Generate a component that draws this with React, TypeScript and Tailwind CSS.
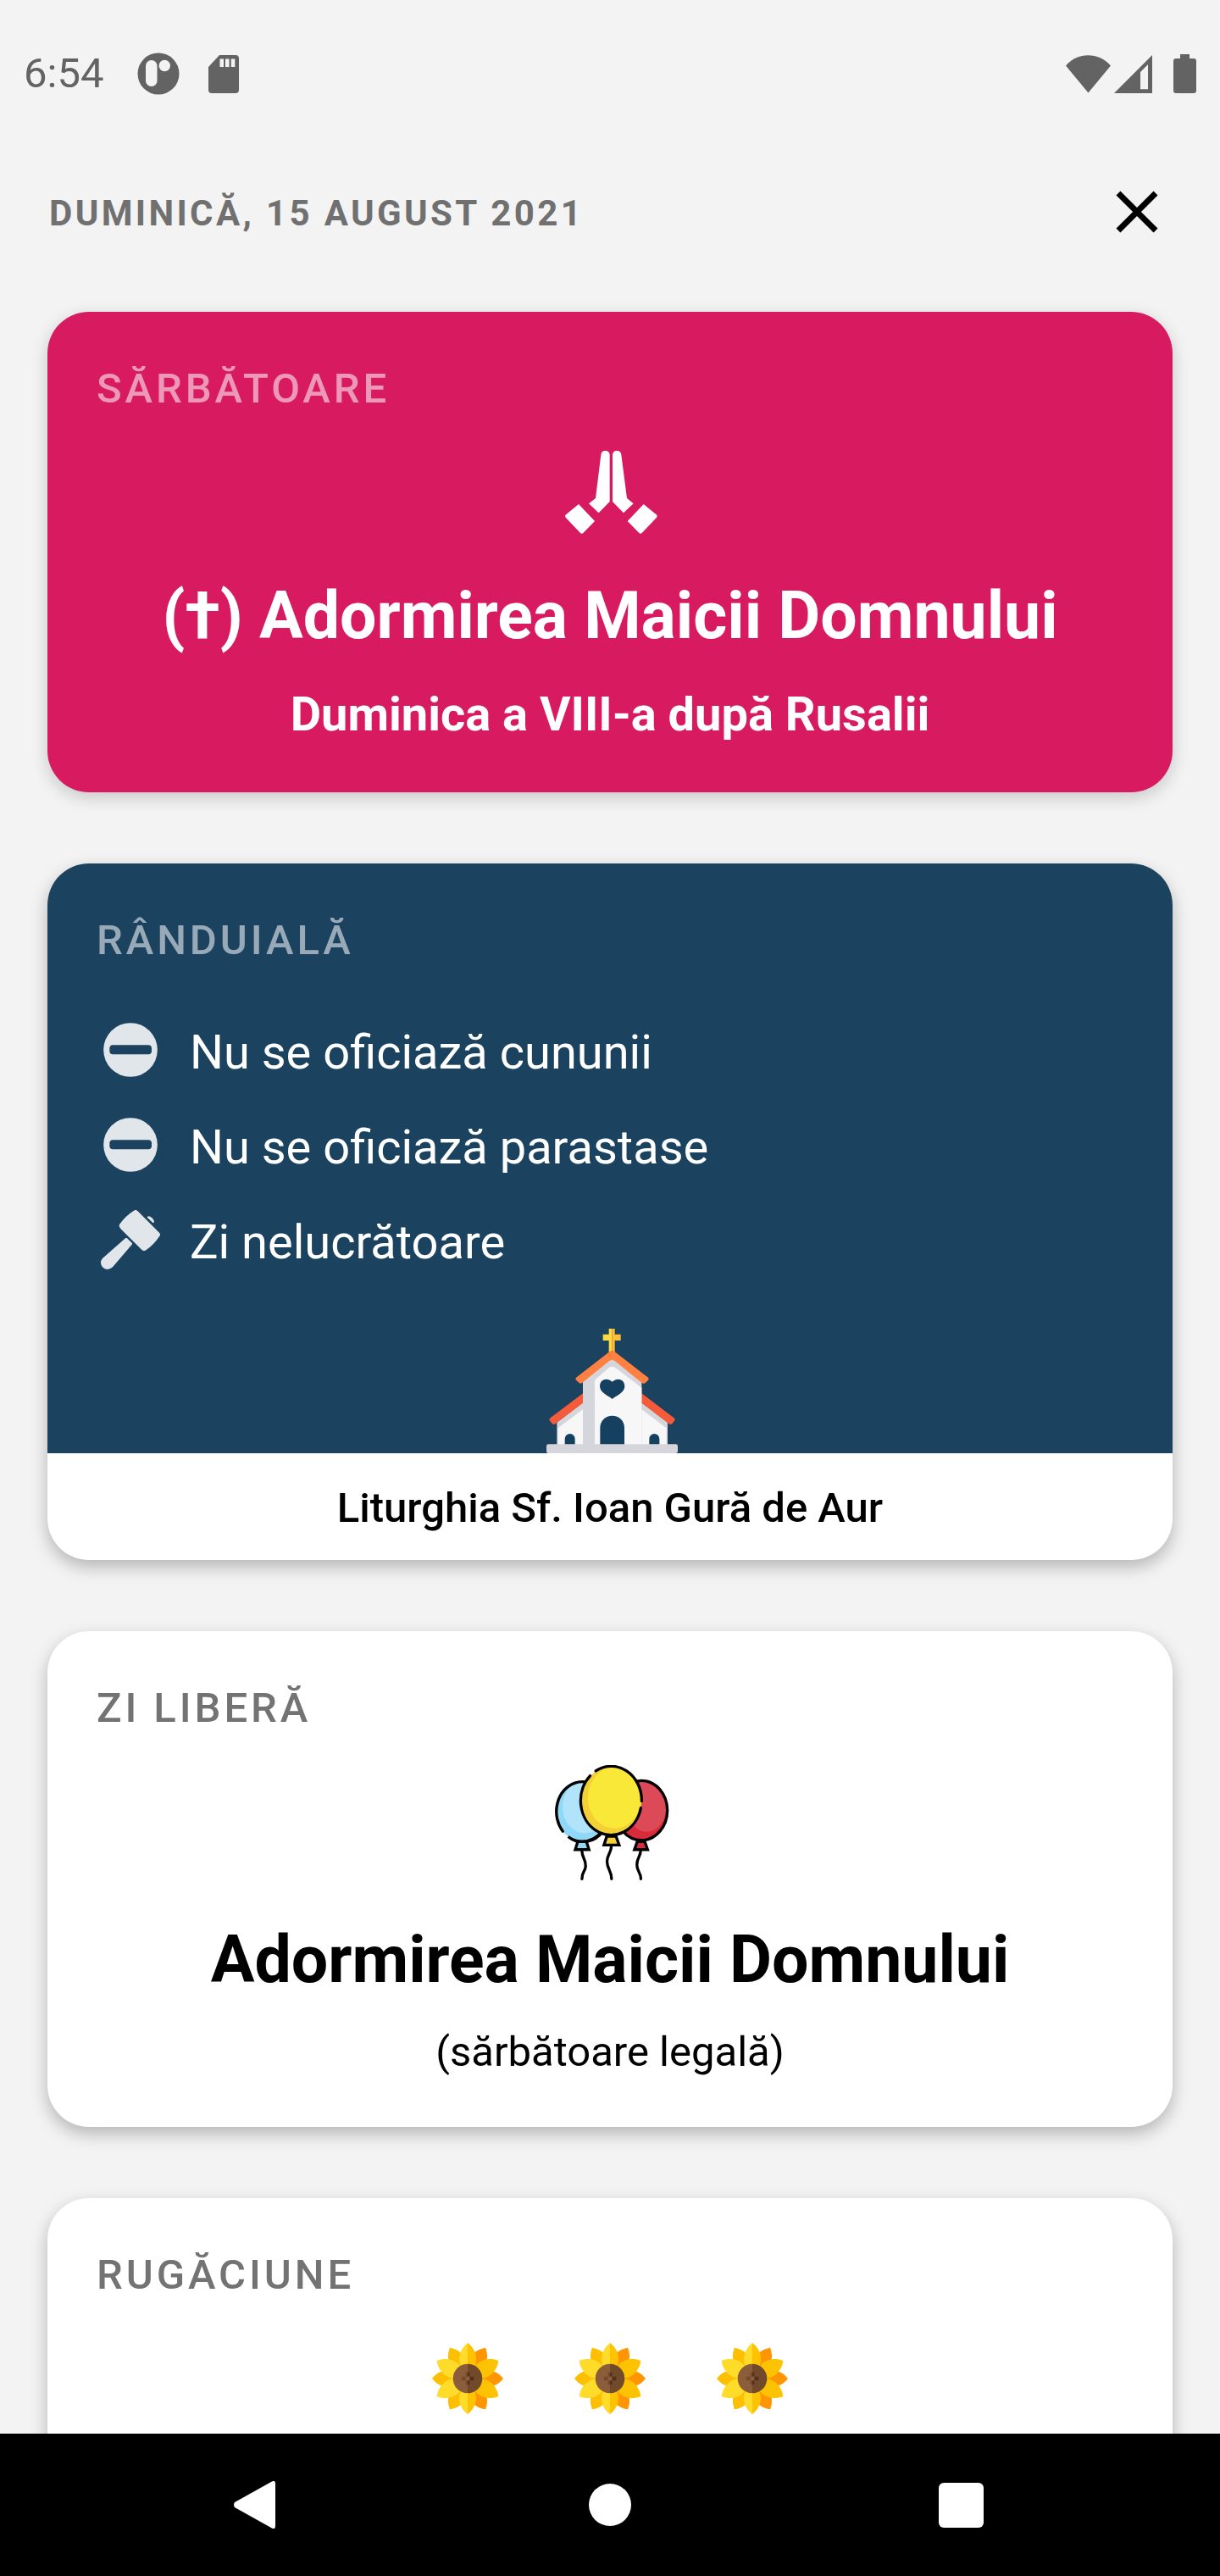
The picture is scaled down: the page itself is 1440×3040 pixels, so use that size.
import type { ReactNode } from "react";

const StatusBar = () => (
  <div className="flex h-[174px] shrink-0 items-center justify-between px-7 text-[#636363]">
    <div className="flex items-center">
      <span className="text-[49px] leading-[56px]">6:54</span>
      <svg className="ml-10 size-[50px]" viewBox="0 0 50 50" aria-hidden="true">
        <circle cx="25" cy="25" r="24.5" fill="currentColor" />
        <rect x="10" y="9" width="13.5" height="31" rx="6.7" fill="#f3f3f3" />
        <circle cx="32.3" cy="15.5" r="6.7" fill="#f3f3f3" />
      </svg>
      <svg className="ml-[34px] h-[45px] w-9" viewBox="0 0 36 45" aria-hidden="true">
        <path d="M13 0H32a4 4 0 0 1 4 4V41a4 4 0 0 1-4 4H4a4 4 0 0 1-4-4V14Z" fill="currentColor" />
        <path d="M13.5 4.5H18V14H13.5ZM20 4.5H24.500V14H20ZM26.800 4.500H31.300V14H26.800Z" fill="#f3f3f3" />
      </svg>
    </div>
    <div className="flex items-center">
      <svg className="h-[45px] w-[53px]" viewBox="0 0 53 45" aria-hidden="true">
        <path d="M26.500 44.500L0 12.500C14-4 39-4 53 12.500Z" fill="currentColor" />
      </svg>
      <svg className="ml-1 size-[45px]" viewBox="0 0 45 45" aria-hidden="true">
        <path fillRule="evenodd" d="M45 0V45H0ZM31 20V40.300H40V11Z" fill="currentColor" />
      </svg>
      <svg className="ml-[25px] h-[46px] w-[27px]" viewBox="0 0 27 46" aria-hidden="true">
        <path d="M8 0H19V5H24a3 3 0 0 1 3 3V43a3 3 0 0 1-3 3H3a3 3 0 0 1-3-3V8a3 3 0 0 1 3-3H8Z" fill="currentColor" />
      </svg>
    </div>
  </div>
);

const PrayIcon = () => (
  <svg className="h-[98px] w-28" viewBox="73 66 336 294" fill="#fff" aria-hidden="true">
    <path d="M209 80A15.500 14.500 0 0 1 240 80V246L201 286L166 253L190 234Z" />
    <path d="M281 80A15.500 14.500 0 0 0 250 80V246L289 286L324 253L301 234Z" />
    <path d="M130 255L187 315L146 357Q141 362 136 357L84 302Q80 296 85 292Z" />
    <path d="M360 255L303 315L344 357Q349 362 354 357L406 302Q410 296 405 292Z" />
  </svg>
);

const NoEntryIcon = () => (
  <svg className="h-[72px] w-[84px] shrink-0" viewBox="0 0 252 216" aria-hidden="true">
    <circle cx="126" cy="99" r="95.500" fill="#e1e6ea" />
    <rect x="52" y="82" width="149" height="33" rx="12" fill="#1b425e" />
  </svg>
);

const HammerIcon = () => (
  <svg className="h-[72px] w-[84px] shrink-0 overflow-visible" viewBox="0 0 252 216" fill="#e1e6ea" aria-hidden="true">
    <path d="M137 -3Q144 -9 151 -3L228 74Q234 80 228 88Q208 118 181 136Q174 141 167 136L90 59Q83 52 87 45Q107 16 137 -3Z" />
    <path d="M108 94Q111 91 114 94L131 110Q134 113 131 116L63 196Q45 211 28 197Q14 181 27 165Z" />
    <path d="M186 17Q193 13 202 22Q212 32 209 39Q207 40 204 38L187 22Q184 19 186 17Z" />
  </svg>
);

const ChurchIcon = () => (
  <svg className="h-[147px] w-40" viewBox="34 54 480 441" aria-hidden="true">
    <path d="M270 54H281V140H270V96H249V74H270Z" fill="#fedc3f" />
    <path d="M281 54H291V74H312V96H291V140H281Z" fill="#ffbd3a" />
    <path d="M86 386L180 314V465H86ZM478 386L384 314V465H478Z" fill="#d5d6dc" />
    <path d="M90 406L180 338V465H90ZM474 406L384 338V465H474Z" fill="#f7f7f7" />
    <path d="M180 281L61 371Q57 375 61 380L69 390Q75 396 82 389L180 316Z" fill="#f55b3b" />
    <path d="M384 281L502 371Q506 375 502 380L494 390Q488 396 481 389L384 316Z" fill="#f55b3b" />
    <path d="M178 236L282 158L386 236V465H178Z" fill="#d5d6dc" />
    <path d="M220 465V240Q222 234 228 229L270 193Q282 184 294 193L386 263V465Z" fill="#f7f7f7" />
    <path d="M154 227L270 137Q282 126 293 137L409 227Q413 231 409 236L400 245Q394 251 386 245L292 169Q282 159 271 169L176 245Q170 250 164 245L154 236Q150 231 154 227Z" fill="#ff8041" />
    <path d="M282 242C298 226 326 231 326 258C326 280 299 289 282 303C265 289 238 280 238 258C238 231 266 226 282 242Z" fill="#15405f" />
    <path d="M239 465V405A43 43 0 0 1 325 405V465ZM114 465V444A18 18 0 0 1 150 444V465ZM413 465V444A18 18 0 0 1 449 444V465Z" fill="#15405f" />
    <rect x="49" y="463" width="465" height="32" rx="7" fill="#d5d6dc" />
  </svg>
);

const BalloonsIcon = () => (
  <svg
    className="h-[137px] w-[140px]"
    viewBox="60 66 421 412"
    fill="none"
    stroke="#000"
    strokeWidth="10"
    strokeLinecap="round"
    aria-hidden="true"
  >
    <g stroke="none">
      <ellipse cx="168" cy="227" rx="92" ry="106" fill="#8fd8f8" />
      <ellipse cx="180" cy="214" rx="78" ry="94" fill="#b1e3fb" />
      <ellipse cx="382" cy="227" rx="92" ry="106" fill="#d92b3c" />
      <ellipse cx="401" cy="213" rx="70" ry="90" fill="#dd4a57" />
    </g>
    <path d="M103 301A92 106 0 1 1 122 320A92 106 0 0 0 246 300" />
    <ellipse cx="382" cy="227" rx="92" ry="106" />
    <g stroke="none">
      <ellipse cx="275" cy="194" rx="108" ry="122" fill="#f3d035" />
      <ellipse cx="287" cy="182" rx="95" ry="109" fill="#f9e837" />
    </g>
    <path d="M220 87A108 122 0 0 1 383 194M380 218A108 122 0 1 1 200 104" />
    <path d="M156 338L147 366H196L187 338Z" fill="#8fd8f8" />
    <path d="M259 319L249 350H303L292 319Z" fill="#f3d035" />
    <path d="M367 338L357 366H404L394 338Z" fill="#d92b3c" />
    <path d="M171 372C171 395 185 398 184 425C183 445 170 445 171 470" />
    <path d="M275 356C275 375 260 385 260 408C260 435 276 440 276 470" />
    <path d="M379 372C379 390 366 395 366 420C366 445 380 445 380 470" />
  </svg>
);

const petal = "M156 75C178 92 186 115 186 133C186 155 172 175 156 190C140 175 126 155 126 133C126 115 134 92 156 75Z";

const petals = [
  { angle: 30, fill: "#ff9500" },
  { angle: 90, fill: "#ff9500" },
  { angle: 150, fill: "#ff9500" },
  { angle: 210, fill: "#fdbf00" },
  { angle: 270, fill: "#fdbf00" },
  { angle: 330, fill: "#fdbf00" },
  { angle: 60, fill: "#fdc200" },
  { angle: 120, fill: "#fdc200" },
  { angle: 240, fill: "#ffdb2a" },
  { angle: 300, fill: "#ffdb2a" },
  { angle: 0, fill: "#ffdb2a" },
  { angle: 180, fill: "#fdc200" },
];

const Sunflower = () => (
  <svg className="size-[84px]" viewBox="30 75 252 252" aria-hidden="true">
    {petals.map(({ angle, fill }) => (
      <path key={angle} d={petal} fill={fill} transform={`rotate(${angle} 156 201)`} />
    ))}
    <path d="M156 75C178 92 186 115 186 133C186 155 172 175 156 190Z" fill="#fdc200" />
    <path d="M156 327C134 310 126 287 126 269C126 247 140 227 156 212Z" fill="#ffdb2a" />
    <path d="M156 149A52 52 0 0 0 156 253Z" fill="#8b5d3b" />
    <path d="M156 149A52 52 0 0 1 156 253Z" fill="#714a2c" />
    <path d="M135 194H149V208H135ZM149 179H156V194H149ZM149 208H156V223H149Z" fill="#714a2c" />
    <path d="M156 179H163V194H156ZM156 208H163V223H156ZM163 194H178V208H163Z" fill="#53301b" />
    <path d="M156 194H163V208H156Z" fill="#8b5d3b" />
  </svg>
);

const rules = [
  { text: "Nu se oficiază cununii", icon: <NoEntryIcon /> },
  { text: "Nu se oficiază parastase", icon: <NoEntryIcon /> },
  { text: "Zi nelucrătoare", icon: <HammerIcon /> },
];

const CardLabel = ({ children, className }: { children: ReactNode; className: string }) => (
  <h2 className={`pl-0.5 text-[49px] leading-[70px] font-medium tracking-[0.08em] uppercase ${className}`}>
    {children}
  </h2>
);

const NavBar = () => (
  <nav className="grid h-[168px] shrink-0 grid-cols-3 place-items-center bg-black px-24">
    <button type="button" aria-label="Înapoi">
      <svg className="size-14" viewBox="0 0 56 56" fill="#fff" aria-hidden="true">
        <path d="M1 25Q-1 28 1 31L44 55Q49 58 49 53V3Q49 -2 44 1Z" />
      </svg>
    </button>
    <button type="button" aria-label="Acasă">
      <svg className="size-14" viewBox="0 0 56 56" fill="#fff" aria-hidden="true">
        <circle cx="28" cy="28" r="25" />
      </svg>
    </button>
    <button type="button" aria-label="Recente">
      <svg className="size-14" viewBox="0 0 56 56" fill="#fff" aria-hidden="true">
        <rect x="0" y="2" width="53" height="53" rx="6" />
      </svg>
    </button>
  </nav>
);

const App = () => {
  return (
    <div className="flex h-screen flex-col bg-[#f3f3f3] font-[Roboto,sans-serif] text-black">
      <StatusBar />

      <header className="flex h-[152px] shrink-0 items-center justify-between px-14">
        <h1 className="pt-1 pl-0.5 text-[42px] leading-[56px] font-bold tracking-[0.08em] text-[#707070] uppercase">
          Duminică, 15 August 2021
        </h1>
        <button type="button" aria-label="Închide">
          <svg className="size-[84px]" viewBox="0 0 24 24" aria-hidden="true">
            <path d="M19 6.410L17.590 5 12 10.590 6.410 5 5 6.410 10.590 12 5 17.590 6.410 19 12 13.410 17.590 19 19 17.590 13.410 12z" />
          </svg>
        </button>
      </header>

      <main className="flex min-h-0 flex-1 flex-col gap-21 overflow-y-auto px-14 pt-[42px] [scrollbar-width:none]">
        <section className="shrink-0 rounded-[49px] bg-[#d81b60] p-14 text-white shadow-[0_6px_20px_rgba(0,0,0,0.18)]">
          <CardLabel className="text-white/55">Sărbătoare</CardLabel>
          <div className="flex flex-col items-center pt-[38px] text-center">
            <PrayIcon />
            <h3 className="mt-[49px] text-[77px] leading-[96px] font-bold">(†) Adormirea Maicii Domnului</h3>
            <p className="mt-8 text-[56px] leading-[72px] font-bold">Duminica a VIII-a după Rusalii</p>
          </div>
        </section>

        <section className="shrink-0 overflow-hidden rounded-[49px] bg-white shadow-[0_8px_20px_rgba(0,0,0,0.26)]">
          <div className="bg-[#1b425e] px-14 pt-14 text-white">
            <CardLabel className="text-white/55">Rânduială</CardLabel>
            <ul className="flex flex-col gap-10 pt-[61px]">
              {rules.map(({ text, icon }) => (
                <li key={text} className="flex items-center gap-7 text-[56px] leading-[72px]">
                  {icon}
                  {text}
                </li>
              ))}
            </ul>
            <div className="flex justify-center pt-[66px]">
              <ChurchIcon />
            </div>
          </div>
          <p className="pt-[30px] pb-[26px] text-center text-[49px] leading-[70px] font-medium">
            Liturghia Sf. Ioan Gură de Aur
          </p>
        </section>

        <section className="shrink-0 rounded-[49px] bg-white p-14 shadow-[0_8px_20px_rgba(0,0,0,0.26)]">
          <CardLabel className="text-[#737373]">Zi liberă</CardLabel>
          <div className="flex flex-col items-center pt-8 text-center">
            <BalloonsIcon />
            <h3 className="mt-[45px] text-[77px] leading-[96px] font-bold">Adormirea Maicii Domnului</h3>
            <p className="mt-[29px] text-[49px] leading-[64px]">(sărbătoare legală)</p>
          </div>
        </section>

        <section className="shrink-0 rounded-[49px] bg-white px-14 pt-14 pb-28 shadow-[0_8px_20px_rgba(0,0,0,0.26)]">
          <CardLabel className="text-[#737373]">Rugăciune</CardLabel>
          <div className="flex justify-center gap-21 pt-[45px]">
            <Sunflower />
            <Sunflower />
            <Sunflower />
          </div>
        </section>
      </main>

      <NavBar />
    </div>
  );
};

export default App;
